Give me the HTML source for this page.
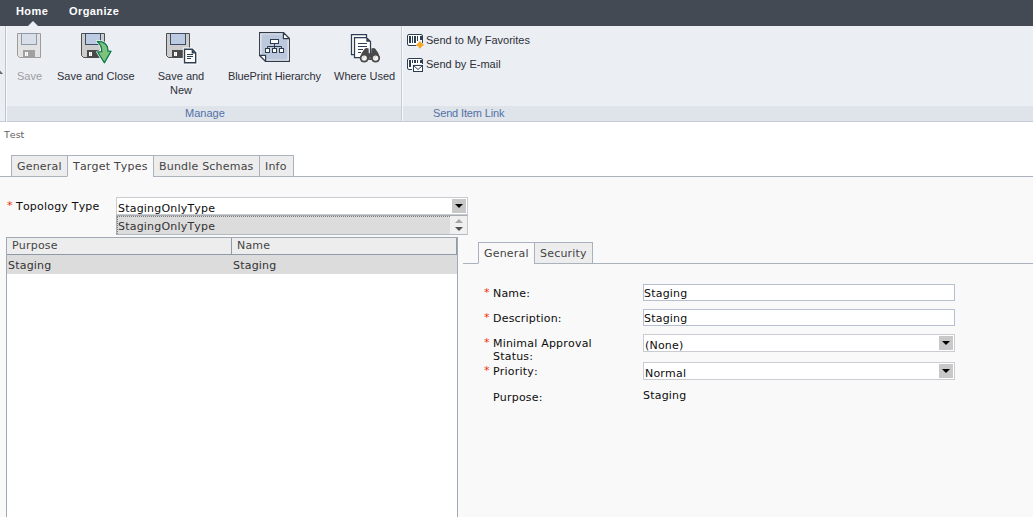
<!DOCTYPE html>
<html>
<head>
<meta charset="utf-8">
<title>Test</title>
<style>
html,body{margin:0;padding:0;}
body{width:1033px;height:517px;overflow:hidden;background:#fff;position:relative;font-family:"DejaVu Sans","Liberation Sans",sans-serif;font-size:11px;color:#333;}
.abs{position:absolute;}
.t{position:absolute;white-space:nowrap;line-height:13px;letter-spacing:0.2px;font-kerning:none;}
/* top bar */
#topbar{left:0;top:0;width:1033px;height:26px;background:#434a54;}
.menu{position:absolute;top:4px;color:#fff;font-family:"Liberation Sans",sans-serif;font-weight:bold;font-size:11px;line-height:14px;white-space:nowrap;letter-spacing:0.4px;}
#notch{left:27.5px;top:21px;width:0;height:0;border-left:5px solid transparent;border-right:5px solid transparent;border-bottom:5px solid #ebeef2;}
/* ribbon */
#ribbon{left:0;top:26px;width:1033px;height:95px;background:#ebeef2;}
#band{left:7px;top:106px;width:1026px;height:15px;background:#dfe3ea;}
#ribbonline{left:0;top:121px;width:1033px;height:1px;background:#c5cbd4;}
#vline{left:5px;top:26px;width:1px;height:96px;background:#bcc4cf;}
#vline2{left:6px;top:26px;width:1px;height:96px;background:#f8f9fb;}
#sep{left:401px;top:26px;width:1px;height:95px;background:#c5cbd4;}
#sep2{left:402px;top:26px;width:1px;height:95px;background:#f8f9fb;}
.rl{position:absolute;font-family:"Liberation Sans",sans-serif;font-size:11px;line-height:14px;color:#2d3039;text-align:center;white-space:nowrap;}
.gl{position:absolute;font-family:"Liberation Sans",sans-serif;font-size:11px;line-height:14px;color:#5272a6;white-space:nowrap;}
/* content */
#content{left:0;top:177px;width:1033px;height:340px;background:#f9f9f9;}
#tabline{left:0;top:176px;width:1033px;height:1px;background:#a9b2bd;}
.tab{position:absolute;box-sizing:border-box;border:1px solid #a9b2bd;background:#ededed;height:22px;top:155px;}
.tab.act{background:#f9f9f9;border-bottom-color:#f9f9f9;}
.red{color:#f52a0a;}

.sel{box-sizing:border-box;border:1px solid #c9ccd1;background:#fff;}
.inp{box-sizing:border-box;border:1px solid #b5bfd0;background:#fff;width:312px;height:17px;}
.btn{width:14px;height:14px;background:#c8c8c8;}
.tri{width:0;height:0;border-left:4px solid transparent;border-right:4px solid transparent;border-top:4px solid #000;}
#listbox{left:116px;top:215px;width:352px;height:20px;box-sizing:border-box;background:#dcdcdc;border:1px solid #a8acb2;border-right-color:#c5c9cf;border-bottom-color:#b4b9c0;}
#lbfocus{left:117px;top:216px;width:333px;height:18px;box-sizing:border-box;border-top:1px dotted #7c7c7c;border-left:1px dotted #7c7c7c;}
#lbscroll{left:450px;top:216px;width:17px;height:18px;background:#f0f0f0;}
#tbl{left:6px;top:237px;width:452px;height:280px;box-sizing:border-box;border:1px solid #a0aab7;border-bottom:none;background:#fff;}
#th1{left:7px;top:238px;width:225px;height:17px;box-sizing:border-box;background:#ededed;border-right:1px solid #909ba9;border-bottom:1px solid #909ba9;}
#th2{left:232px;top:238px;width:225px;height:17px;box-sizing:border-box;background:#ededed;border-right:1px solid #909ba9;border-bottom:1px solid #909ba9;}
#row{left:7px;top:255px;width:450px;height:19px;background:#dcdcdc;}
</style>
</head>
<body>
<!-- top bar -->
<div class="abs" id="topbar"></div>
<div class="menu" style="left:16px;">Home</div>
<div class="menu" style="left:69px;">Organize</div>
<div class="abs" id="notch"></div>

<!-- ribbon -->
<div class="abs" id="ribbon"></div>
<div class="abs" id="band"></div>
<div class="abs" id="ribbonline"></div>
<div class="abs" id="vline"></div>
<div class="abs" id="vline2"></div>
<div class="abs" id="sep"></div>
<div class="abs" id="sep2"></div>

<div class="rl" style="left:17px;top:69px;color:#9b9ea4;">Save</div>
<div class="rl" style="left:57px;top:69px;">Save and Close</div>
<div class="rl" style="left:151px;top:69px;width:60px;white-space:normal;">Save and New</div>
<div class="rl" style="left:228px;top:69px;letter-spacing:-0.1px;">BluePrint Hierarchy</div>
<div class="rl" style="left:334px;top:69px;">Where Used</div>
<div class="rl" style="left:426px;top:33px;">Send to My Favorites</div>
<div class="rl" style="left:426px;top:57px;">Send by E-mail</div>
<div class="gl" style="left:185px;top:106px;">Manage</div>
<div class="gl" style="left:433px;top:106px;letter-spacing:-0.15px;">Send Item Link</div>


<!-- icons -->
<svg class="abs" style="left:17px;top:33px;" width="24" height="25" viewBox="0 0 24 25">
<path d="M0.5 0.5 H23.5 V24.5 H2.5 L0.5 22.5 Z" fill="#e3e3e3" stroke="#9c9c9c" stroke-width="1"/>
<rect x="4.5" y="0.5" width="15" height="11" fill="#d8deea" stroke="#8e99a8" stroke-width="1"/>
<rect x="6" y="17" width="12" height="7.5" fill="#a0a0a0"/>
<rect x="8" y="19" width="3" height="4" fill="#fff"/><rect x="9" y="19" width="1" height="4" fill="#e2e2e2"/>
</svg><svg class="abs" style="left:81px;top:33px;" width="24" height="25" viewBox="0 0 24 25">
<path d="M0.5 0.5 H23.5 V24.5 H2.5 L0.5 22.5 Z" fill="#cdcdcd" stroke="#4f4f4f" stroke-width="1"/>
<rect x="4.5" y="0.5" width="15" height="11" fill="#bccae2" stroke="#3f4d63" stroke-width="1"/>
<rect x="6" y="17" width="12" height="7.5" fill="#4a4a4a"/>
<rect x="8" y="19" width="3" height="4" fill="#fff"/><rect x="9" y="19" width="1" height="4" fill="#e2e2e2"/>
</svg><svg class="abs" style="left:166px;top:33px;" width="24" height="25" viewBox="0 0 24 25">
<path d="M0.5 0.5 H23.5 V24.5 H2.5 L0.5 22.5 Z" fill="#cdcdcd" stroke="#4f4f4f" stroke-width="1"/>
<rect x="4.5" y="0.5" width="15" height="11" fill="#bccae2" stroke="#3f4d63" stroke-width="1"/>
<rect x="6" y="17" width="12" height="7.5" fill="#4a4a4a"/>
<rect x="8" y="19" width="3" height="4" fill="#fff"/><rect x="9" y="19" width="1" height="4" fill="#e2e2e2"/>
</svg>
<svg class="abs" style="left:94px;top:38px;" width="20" height="27" viewBox="94 38 20 27">
<path d="M97.2 41.4 C104 41.4 108.2 44.2 107.9 51.2 L111.1 51.2 L104.4 62.8 L97.6 52 L101.7 51.6 C101.9 47 100.6 44 97.2 41.4 Z" fill="#7fc27e" stroke="#fff" stroke-width="2.6" stroke-linejoin="round"/>
<path d="M97.2 41.4 C104 41.4 108.2 44.2 107.9 51.2 L111.1 51.2 L104.4 62.8 L97.6 52 L101.7 51.6 C101.9 47 100.6 44 97.2 41.4 Z" fill="#7fc27e" stroke="#0c7a50" stroke-width="1.3" stroke-linejoin="round"/>
</svg>
<svg class="abs" style="left:182px;top:47px;" width="16" height="18" viewBox="182 47 16 18">
<path d="M184.5 49.3 H192.3 L195.7 52.7 V62.7 H184.5 Z" fill="#fff" stroke="#fff" stroke-width="3.4"/>
<path d="M184.5 49.3 H192.3 L195.7 52.7 V62.7 H184.5 Z" fill="#fff" stroke="#2e3f52" stroke-width="1.4"/>
<path d="M191.6 49.3 V53.4 H195.7 Z" fill="#2e3f52"/>
<path d="M187 54.5 H193 M187 56.5 H193 M187 58.5 H191" stroke="#2e3f52" stroke-width="1"/>
</svg>
<svg class="abs" style="left:259px;top:32px;" width="31" height="30" viewBox="0 0 31 30">
<path d="M0.6 0.6 H24.4 L30.4 6.6 V29.4 H6.6 L0.6 23.4 Z" fill="#fff" stroke="#2f3b4a" stroke-width="1.1"/>
<path d="M2.3 2.3 H24 V7 H28.7 V27.7 H7 V23 H2.3 Z" fill="#bcc8dd"/>
<path d="M24.4 0.6 V6.6 H30.4 Z" fill="#fff" stroke="#2f3b4a" stroke-width="1.2" stroke-linejoin="round"/>
<path d="M0.6 23.4 H6.6 V29.4 Z" fill="#fff" stroke="#2f3b4a" stroke-width="1.2" stroke-linejoin="round"/>
<rect x="11.5" y="7.5" width="8" height="4" fill="#fff" stroke="#2f3b4a"/>
<path d="M15.5 12 V14.5 M8.5 16 V14.5 H22.5 V16 M15.5 14.5 V16" stroke="#2f3b4a" fill="none"/>
<rect x="6.5" y="16.5" width="4" height="4" fill="#fff" stroke="#2f3b4a"/>
<rect x="13.5" y="16.5" width="4" height="4" fill="#fff" stroke="#2f3b4a"/>
<rect x="20.5" y="16.5" width="4" height="4" fill="#fff" stroke="#2f3b4a"/>
</svg>
<svg class="abs" style="left:350px;top:33px;" width="31" height="31" viewBox="350 33 31 31">
<path d="M366.5 37 V34.5 H351.5 V54.5 H354" fill="#fff" stroke="#2e3f55" stroke-width="1.25"/>
<path d="M354.5 37.5 H366.5 L370.5 41.5 V57.5 H354.5 Z" fill="#fff" stroke="#2e3f55" stroke-width="1.25"/>
<path d="M366.3 37.5 V41.7 H370.5 Z" fill="#2e3f55"/>
<path d="M358 43.5 H367 M358 46.5 H367 M358 49.5 H363 M358 52.5 H361" stroke="#2e3f55" stroke-width="1"/>
<path d="M364.9 48.6 Q366.8 47.3 368.6 48.6 L368.8 53.2 L371.2 53.2 L371.4 48.6 Q373.2 47.3 375.1 48.6 Q379 53 380 58 L371 60 L369 60 L360 58 Q360.9 53 364.9 48.6 Z" fill="#4a4a4a"/>
<circle cx="364.2" cy="58.1" r="4.5" fill="#4a4a4a"/>
<circle cx="375.6" cy="58.1" r="4.5" fill="#4a4a4a"/>
<circle cx="364.2" cy="58.1" r="2.7" fill="#f4f4f4"/>
<circle cx="375.6" cy="58.1" r="2.7" fill="#f4f4f4"/>
<path d="M362.6 58.6 Q362.8 56.6 364.6 56.3" stroke="#bdbdbd" stroke-width="0.7" fill="none"/>
<path d="M374 58.6 Q374.2 56.6 376 56.3" stroke="#bdbdbd" stroke-width="0.7" fill="none"/>
<rect x="369.4" y="57.3" width="1.2" height="1.4" fill="#8a8a8a"/>
</svg>
<svg class="abs" style="left:406px;top:33px;" width="20" height="16" viewBox="406 33 20 16">
<rect x="407.5" y="34.5" width="15" height="11" rx="1.5" fill="#fff" stroke="#2e3f55"/>
<path d="M409 36 H411 V43 H409 Z M412 36 H413 V43 H412 Z M414 36 H416 V43 H414 Z M417 36 H418 V41 H417 Z M420 36 H422 V40 H420 Z" fill="#2e3f55"/>
<path d="M420 40.6 L424.3 44.9 L420 49.2 L415.7 44.9 Z" fill="#ebeef2"/><path d="M420 41.8 Q420.9 44 423.1 44.9 Q420.9 45.8 420 48 Q419.1 45.8 416.9 44.9 Q419.1 44 420 41.8 Z" fill="#f5a623" stroke="#f5a623" stroke-width="1.2" stroke-linejoin="round"/>
</svg>
<svg class="abs" style="left:406px;top:57px;" width="20" height="16" viewBox="406 57 20 16">
<rect x="407.5" y="58.5" width="15" height="11" rx="1.5" fill="#fff" stroke="#2e3f55"/>
<path d="M409 60 H411 V67 H409 Z M412 60 H413 V63 H412 Z M414 60 H416 V63 H414 Z M417 60 H418 V63 H417 Z M420 60 H422 V63 H420 Z" fill="#2e3f55"/>
<rect x="412" y="64" width="12" height="9" fill="#ebeef2"/>
<rect x="413.5" y="65.5" width="9" height="6" fill="#fff" stroke="#2e3f55"/>
<path d="M413.5 65.5 L418 69.5 L422.5 65.5" fill="none" stroke="#2e3f55"/>
</svg>
<svg class="abs" style="left:0px;top:70px;" width="4" height="5" viewBox="0 0 4 5"><path d="M-3 4 L0 0.6 L3.2 4 Z" fill="#6e6e6e"/></svg>

<!-- title -->
<div class="t" style="left:4px;top:128px;font-size:9.5px;color:#636363;letter-spacing:0;">Test</div>

<!-- main tabs -->
<div class="abs" id="content"></div>
<div class="abs" id="tabline"></div>
<div class="tab" style="left:11px;width:57px;"></div>
<div class="tab act" style="left:67px;width:87px;"></div>
<div class="tab" style="left:153px;width:107px;"></div>
<div class="tab" style="left:259px;width:35px;"></div>
<div class="t" style="left:17px;top:160px;color:#444;">General</div>
<div class="t" style="left:73px;top:160px;color:#444;">Target Types</div>
<div class="t" style="left:159px;top:160px;color:#444;">Bundle Schemas</div>
<div class="t" style="left:265px;top:160px;color:#444;">Info</div>

<!-- topology row -->
<div class="t red" style="left:7px;top:199px;">*</div>
<div class="t" style="left:16px;top:200px;color:#0c0c0c;">Topology Type</div>
<div class="abs sel" style="left:116px;top:197px;width:352px;height:18px;"></div>
<div class="abs btn" style="left:452px;top:199px;"></div>
<div class="abs tri" style="left:455px;top:204px;"></div>
<div class="t" style="left:118px;top:202px;color:#0c0c0c;">StagingOnlyType</div>
<div class="abs" id="listbox"></div>
<div class="abs" id="lbfocus"></div>
<div class="abs" id="lbscroll"></div>
<div class="abs" style="left:455px;top:219px;width:0;height:0;border-left:4px solid transparent;border-right:4px solid transparent;border-bottom:4px solid #a6a6a6;"></div>
<div class="abs" style="left:455px;top:227px;width:0;height:0;border-left:4px solid transparent;border-right:4px solid transparent;border-top:4px solid #505050;"></div>
<div class="t" style="left:118px;top:220px;color:#333;">StagingOnlyType</div>

<!-- table -->
<div class="abs" id="tbl"></div>
<div class="abs" id="th1"></div>
<div class="abs" id="th2"></div>
<div class="abs" id="row"></div>
<div class="t" style="left:12px;top:239px;color:#444;">Purpose</div>
<div class="t" style="left:237px;top:239px;color:#444;">Name</div>
<div class="t" style="left:8px;top:259px;color:#333;">Staging</div>
<div class="t" style="left:233px;top:259px;color:#333;">Staging</div>

<!-- right panel tabs -->
<div class="abs" style="left:463px;top:263px;width:570px;height:1px;background:#a9b2bd;"></div>
<div class="tab act" style="left:478px;top:242px;width:57px;"></div>
<div class="tab" style="left:534px;top:242px;width:59px;"></div>
<div class="t" style="left:484px;top:247px;color:#444;">General</div>
<div class="t" style="left:540px;top:247px;color:#444;">Security</div>

<!-- form -->
<div class="t red" style="left:484px;top:286px;">*</div>
<div class="t" style="left:493px;top:287px;color:#0c0c0c;">Name:</div>
<div class="abs inp" style="left:643px;top:284px;"></div>
<div class="t" style="left:644px;top:287px;color:#0c0c0c;">Staging</div>

<div class="t red" style="left:484px;top:311px;">*</div>
<div class="t" style="left:493px;top:312px;color:#0c0c0c;">Description:</div>
<div class="abs inp" style="left:643px;top:309px;"></div>
<div class="t" style="left:644px;top:312px;color:#0c0c0c;">Staging</div>

<div class="t red" style="left:484px;top:336px;">*</div>
<div class="t" style="left:493px;top:337px;color:#0c0c0c;">Minimal Approval</div>
<div class="t" style="left:493px;top:350px;color:#0c0c0c;">Status:</div>
<div class="abs sel" style="left:643px;top:334px;width:312px;height:18px;"></div>
<div class="abs btn" style="left:939px;top:336px;"></div>
<div class="abs tri" style="left:942px;top:341px;"></div>
<div class="t" style="left:645px;top:339px;color:#0c0c0c;">(None)</div>

<div class="t red" style="left:484px;top:364px;">*</div>
<div class="t" style="left:493px;top:365px;color:#0c0c0c;">Priority:</div>
<div class="abs sel" style="left:643px;top:362px;width:312px;height:18px;"></div>
<div class="abs btn" style="left:939px;top:364px;"></div>
<div class="abs tri" style="left:942px;top:369px;"></div>
<div class="t" style="left:645px;top:367px;color:#0c0c0c;">Normal</div>

<div class="t" style="left:493px;top:391px;color:#0c0c0c;">Purpose:</div>
<div class="t" style="left:643px;top:389px;color:#0c0c0c;">Staging</div>

</body>
</html>
